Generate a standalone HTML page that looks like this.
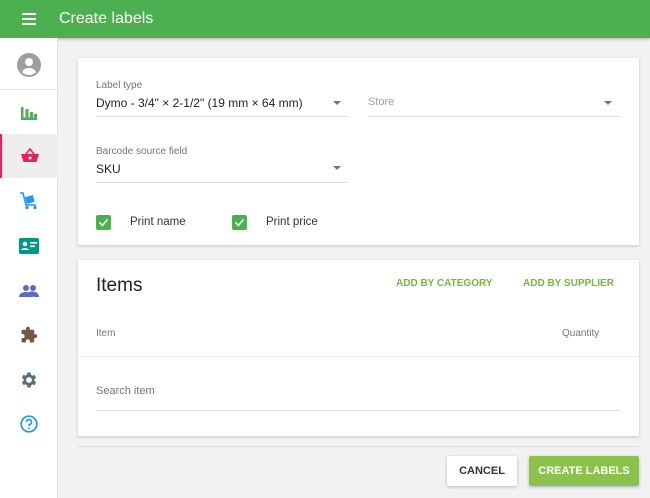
<!DOCTYPE html><html><head><style>
*{box-sizing:border-box;margin:0;padding:0}
body{width:650px;height:498px;background:#f2f2f2;font-family:"Liberation Sans",Arial,sans-serif;position:relative;overflow:hidden}
.hdr{position:absolute;left:0;top:0;width:650px;height:38px;background:#4caf50;box-shadow:0 1px 3px rgba(0,0,0,.3);color:#fff}
.hdr .t{position:absolute;left:59px;top:10px;font-size:16px}
.side{position:absolute;left:0;top:38px;width:58px;height:460px;background:#fff;border-right:1px solid #e0e0e0}
.it{position:absolute;left:0;width:58px;height:44px;display:flex;align-items:center;justify-content:center}
.card{position:absolute;left:78px;width:561px;background:#fff;box-shadow:0 1px 3px rgba(0,0,0,.2)}
.lbl{position:absolute;font-size:10px;color:#757575}
.val{position:absolute;font-size:12px;color:#222}
.ul{position:absolute;height:1px;background:#ddd}
.arr{position:absolute;width:0;height:0;border-left:4px solid transparent;border-right:4px solid transparent;border-top:4px solid #757575}
.cb{position:absolute;width:15px;height:15px;background:#4caf50;border-radius:2px}
.cb svg{position:absolute;left:1px;top:1px}
.btn{position:absolute;font-size:11px;font-weight:bold;display:flex;align-items:center;justify-content:center;border-radius:2px}
</style></head><body>
<div class="hdr"><svg style="position:absolute;left:22px;top:13px" width="14" height="12"><rect y="0" width="14" height="2" fill="#fff"/><rect y="5" width="14" height="2" fill="#fff"/><rect y="10" width="14" height="2" fill="#fff"/></svg><div class="t">Create labels</div></div>
<div class="side">
<div class="it" style="top:5px;height:44px"><svg width="24" height="24" viewBox="0 0 24 24"><circle cx="12" cy="12" r="12" fill="#9e9e9e"/><circle cx="12" cy="9" r="4" fill="#fff"/><path d="M5 19c1.5-3 4-4 7-4s5.5 1 7 4c-2 2-4.5 3-7 3s-5-1-7-3z" fill="#fff"/></svg></div>
<div style="position:absolute;left:0;top:51px;width:58px;height:1px;background:#e6e6e6"></div>
<div class="it" style="top:52px;padding-top:2px"><svg width="18" height="16"><rect x="1" y="2" width="2.5" height="13" fill="#4caf50"/><rect x="1" y="12.5" width="16" height="2.5" fill="#4caf50"/><rect x="5.5" y="4" width="3" height="10" fill="#4caf50"/><rect x="10" y="7" width="3" height="7" fill="#4caf50"/><rect x="14" y="9" width="3" height="5" fill="#4caf50"/></svg></div>
<div class="it" style="top:96px;background:#eee;border-left:2px solid #e91e63"><svg width="18" height="16" viewBox="0 0 18 16"><path d="M5 6l4-5 4 5" stroke="#e91e63" stroke-width="1.6" fill="none"/><path d="M0 6h18l-2.5 8h-13z" fill="#e91e63"/><circle cx="9" cy="10" r="1.5" fill="#fff"/></svg></div>
<div class="it" style="top:141px"><svg width="20" height="18"><path d="M1 1h3l3 12h10" stroke="#2196f3" stroke-width="1.6" fill="none"/><rect x="7" y="4" width="8" height="7" fill="#2196f3" transform="rotate(-15 11 8)"/><circle cx="8" cy="15.5" r="1.6" fill="#2196f3"/><circle cx="16" cy="15.5" r="1.6" fill="#2196f3"/></svg></div>
<div class="it" style="top:186px"><svg width="20" height="16"><rect width="20" height="16" rx="2" fill="#009688"/><circle cx="6" cy="6" r="2.3" fill="#fff"/><path d="M2 12c1-2.5 7-2.5 8 0z" fill="#fff"/><rect x="11" y="4" width="7" height="1.6" fill="#fff"/><rect x="11" y="7.5" width="5" height="1.6" fill="#fff"/></svg></div>
<div class="it" style="top:231px"><svg width="20" height="12"><circle cx="7" cy="3" r="3" fill="#5c6bc0"/><circle cx="14" cy="3" r="3" fill="#5c6bc0"/><path d="M0 12c0-4 4-5 7-5s7 1 7 5z" fill="#5c6bc0"/><path d="M10 7c2-1 10-1 10 5h-5z" fill="#5c6bc0"/></svg></div>
<div class="it" style="top:275px"><svg width="18" height="18" viewBox="0 0 24 24"><path d="M20.5 11H19V7a2 2 0 0 0-2-2h-4V3.5a2.5 2.5 0 0 0-5 0V5H4a2 2 0 0 0-2 2v3.8h1.5a2.7 2.7 0 0 1 0 5.4H2V20a2 2 0 0 0 2 2h3.8v-1.5a2.7 2.7 0 0 1 5.4 0V22H17a2 2 0 0 0 2-2v-4h1.5a2.5 2.5 0 0 0 0-5z" fill="#795548"/></svg></div>
<div class="it" style="top:320px"><svg width="20" height="20" viewBox="0 0 24 24"><path d="M19.4 13a7.5 7.5 0 0 0 0-2l2.1-1.6-2-3.5-2.5 1a7 7 0 0 0-1.7-1L15 3h-4l-.4 2.7a7 7 0 0 0-1.7 1l-2.5-1-2 3.5L6.6 11a7.5 7.5 0 0 0 0 2l-2.1 1.6 2 3.5 2.5-1a7 7 0 0 0 1.7 1L11 21h4l.4-2.7a7 7 0 0 0 1.7-1l2.5 1 2-3.5zM13 15.5a3.5 3.5 0 1 1 0-7 3.5 3.5 0 0 1 0 7z" fill="#546e7a" transform="translate(-1 0)"/></svg></div>
<div class="it" style="top:364px"><svg width="18" height="18" viewBox="0 0 18 18"><circle cx="9" cy="9" r="7.8" stroke="#2196f3" stroke-width="1.7" fill="none"/><path d="M6.5 7a2.5 2.5 0 1 1 3.5 2.3c-.8.4-1 .9-1 1.7" stroke="#2196f3" stroke-width="1.7" fill="none"/><circle cx="9" cy="13.3" r="1" fill="#2196f3"/></svg></div>
</div>
<div class="card" style="top:58px;height:187px">
<div class="lbl" style="left:18px;top:22px">Label type</div>
<div class="val" style="left:18px;top:38px">Dymo - 3/4" × 2-1/2" (19 mm × 64 mm)</div>
<div class="arr" style="left:255px;top:43px"></div>
<div class="ul" style="left:18px;top:58px;width:252px"></div>
<div class="val" style="left:290px;top:38px;color:#9e9e9e;font-size:11px">Store</div>
<div class="arr" style="left:526px;top:43px"></div>
<div class="ul" style="left:290px;top:58px;width:252px"></div>
<div class="lbl" style="left:18px;top:88px">Barcode source field</div>
<div class="val" style="left:18px;top:104px">SKU</div>
<div class="arr" style="left:255px;top:108px"></div>
<div class="ul" style="left:18px;top:124px;width:252px"></div>
<div class="cb" style="left:18px;top:157px"><svg width="13" height="13"><path d="M2.5 6.5l3 3 5-6" stroke="#fff" stroke-width="1.6" fill="none"/></svg></div>
<div class="val" style="left:52px;top:158px;font-size:11.5px;color:#333">Print name</div>
<div class="cb" style="left:154px;top:157px"><svg width="13" height="13"><path d="M2.5 6.5l3 3 5-6" stroke="#fff" stroke-width="1.6" fill="none"/></svg></div>
<div class="val" style="left:188px;top:158px;font-size:11.5px;color:#333">Print price</div>
</div>
<div class="card" style="top:260px;height:176px">
<div style="position:absolute;left:18px;top:15px;font-size:19px;color:#222">Items</div>
<div style="position:absolute;left:318px;top:18px;font-size:10px;font-weight:bold;color:#7cb342">ADD BY CATEGORY</div>
<div style="position:absolute;left:445px;top:18px;font-size:10px;font-weight:bold;color:#7cb342">ADD BY SUPPLIER</div>
<div class="lbl" style="left:18px;top:68px">Item</div>
<div class="lbl" style="left:484px;top:68px">Quantity</div>
<div class="ul" style="left:0;top:96px;width:561px;background:#eee"></div>
<div class="val" style="left:18px;top:125px;color:#757575;font-size:11px">Search item</div>
<div class="ul" style="left:18px;top:150px;width:524px"></div>
</div>
<div style="position:absolute;left:78px;top:446px;width:561px;height:1px;background:#ddd"></div>
<div class="btn" style="left:447px;top:456px;width:70px;height:30px;background:#fff;color:#333;box-shadow:0 1px 3px rgba(0,0,0,.25)">CANCEL</div>
<div class="btn" style="left:529px;top:456px;width:110px;height:30px;background:#8bc34a;color:#fff;box-shadow:0 1px 3px rgba(0,0,0,.25)">CREATE LABELS</div>
</body></html>
